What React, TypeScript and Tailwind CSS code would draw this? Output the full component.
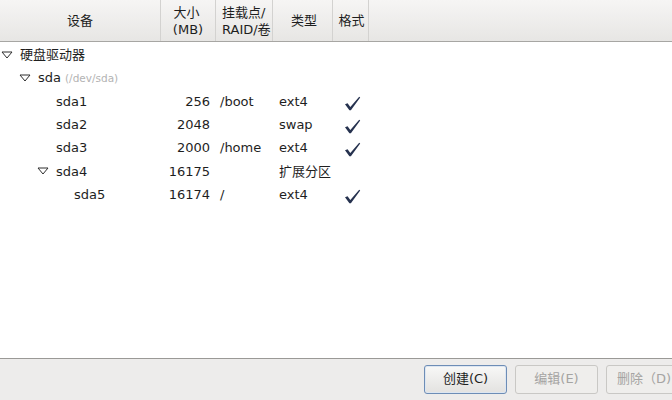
import React from "react";

type Row = {
  level: number;
  name: string;
  sub?: string;
  expander?: boolean;
  size?: string;
  mount?: string;
  type?: string;
  fmt?: boolean;
};

const rows: Row[] = [
  { level: 0, name: "硬盘驱动器", expander: true },
  { level: 1, name: "sda", sub: "(/dev/sda)", expander: true },
  { level: 2, name: "sda1", size: "256", mount: "/boot", type: "ext4", fmt: true },
  { level: 2, name: "sda2", size: "2048", type: "swap", fmt: true },
  { level: 2, name: "sda3", size: "2000", mount: "/home", type: "ext4", fmt: true },
  { level: 2, name: "sda4", size: "16175", type: "扩展分区", expander: true },
  { level: 3, name: "sda5", size: "16174", mount: "/", type: "ext4", fmt: true },
];

function Triangle() {
  return (
    <svg width="12" height="8" viewBox="0 0 12 8" className="block">
      <polygon points="1,1 11,1 6,7" fill="#ffffff" stroke="#2e2e2e" strokeWidth="1" strokeLinejoin="miter" />
    </svg>
  );
}

function Check() {
  return (
    <svg width="17" height="15" viewBox="0 0 17 15" className="block">
      <path d="M1 8.2 L3.6 7.2 L6.3 11 L15.2 0.8 L16.2 1.6 L6.9 14.2 L5.4 14.2 Z" fill="#26324f" />
    </svg>
  );
}

const indent: Record<number, string> = {
  0: "pl-0",
  1: "pl-[18px]",
  2: "pl-[36px]",
  3: "pl-[54px]",
};

export default function App() {
  return (
    <div className="w-[672px] h-[400px] flex flex-col bg-[#edeceb] overflow-hidden font-['DejaVu_Sans','Noto_Sans_CJK_SC',sans-serif] text-[13px] text-[#1e1e1e]">
      <div className="flex-1 flex flex-col bg-white border-b border-[#9a9996]">
        {/* header */}
        <div className="h-[42px] flex border-b border-[#a7a6a3] bg-gradient-to-b from-[#f6f5f4] to-[#e7e6e4] leading-[17px]">
          <div className="w-[161px] flex items-center justify-center border-r border-[#d3d2d0]">设备</div>
          <div className="w-[55px] flex flex-col items-center justify-center border-r border-[#d3d2d0]">
            <span className="pr-[3px]">大小</span>
            <span>(MB)</span>
          </div>
          <div className="w-[57px] flex flex-col justify-center pl-[6px] border-r border-[#d3d2d0]">
            <span>挂载点/</span>
            <span>RAID/卷</span>
          </div>
          <div className="w-[60px] flex items-center justify-center pl-[3px] border-r border-[#d3d2d0]">类型</div>
          <div className="w-[36px] flex items-center justify-center pl-[2px] border-r border-[#d3d2d0]">格式</div>
          <div className="flex-1" />
        </div>
        {/* body */}
        <div className="flex flex-col pt-[1px]">
          {rows.map((r, i) => (
            <div key={i} className="h-[23.33px] flex items-center">
              <div className={`w-[161px] flex items-center ${indent[r.level]}`}>
                <div className="w-[20px] flex items-center pl-[1px]">{r.expander ? <Triangle /> : null}</div>
                <div className="flex items-baseline">
                  <span className="whitespace-nowrap">{r.name}</span>
                  {r.sub ? <span className="ml-[4px] text-[10.5px] text-[#b3b3b3]">{r.sub}</span> : null}
                </div>
              </div>
              <div className="w-[55px] text-right pr-[6px]">{r.size ?? ""}</div>
              <div className="w-[57px] pl-[4px]">{r.mount ?? ""}</div>
              <div className="w-[60px] pl-[6px] whitespace-nowrap">{r.type ?? ""}</div>
              <div className="w-[36px] flex items-center pl-[11px] pt-[4px]">{r.fmt ? <Check /> : null}</div>
            </div>
          ))}
        </div>
      </div>
      {/* button bar */}
      <div className="h-[41px] flex items-center justify-end gap-[8px] pb-[1px]">
        <button className="w-[83px] h-[29px] rounded-[3px] border border-[#6d8db6] bg-gradient-to-b from-[#f8f8f7] to-[#e3e2e0] text-[#1e1e1e] shadow-[inset_0_0_0_1px_#dde6f1]">
          创建(C)
        </button>
        <button className="w-[83px] h-[29px] rounded-[3px] border border-[#c9c8c5] bg-[#efeeec] text-[#a5a4a2]">
          编辑(E)
        </button>
        <button className="w-[83px] h-[29px] rounded-[3px] border border-[#c9c8c5] bg-[#efeeec] text-[#a5a4a2] mr-[-17px] shrink-0 text-left pl-[10px] whitespace-nowrap">
          删除（D)
        </button>
      </div>
    </div>
  );
}
